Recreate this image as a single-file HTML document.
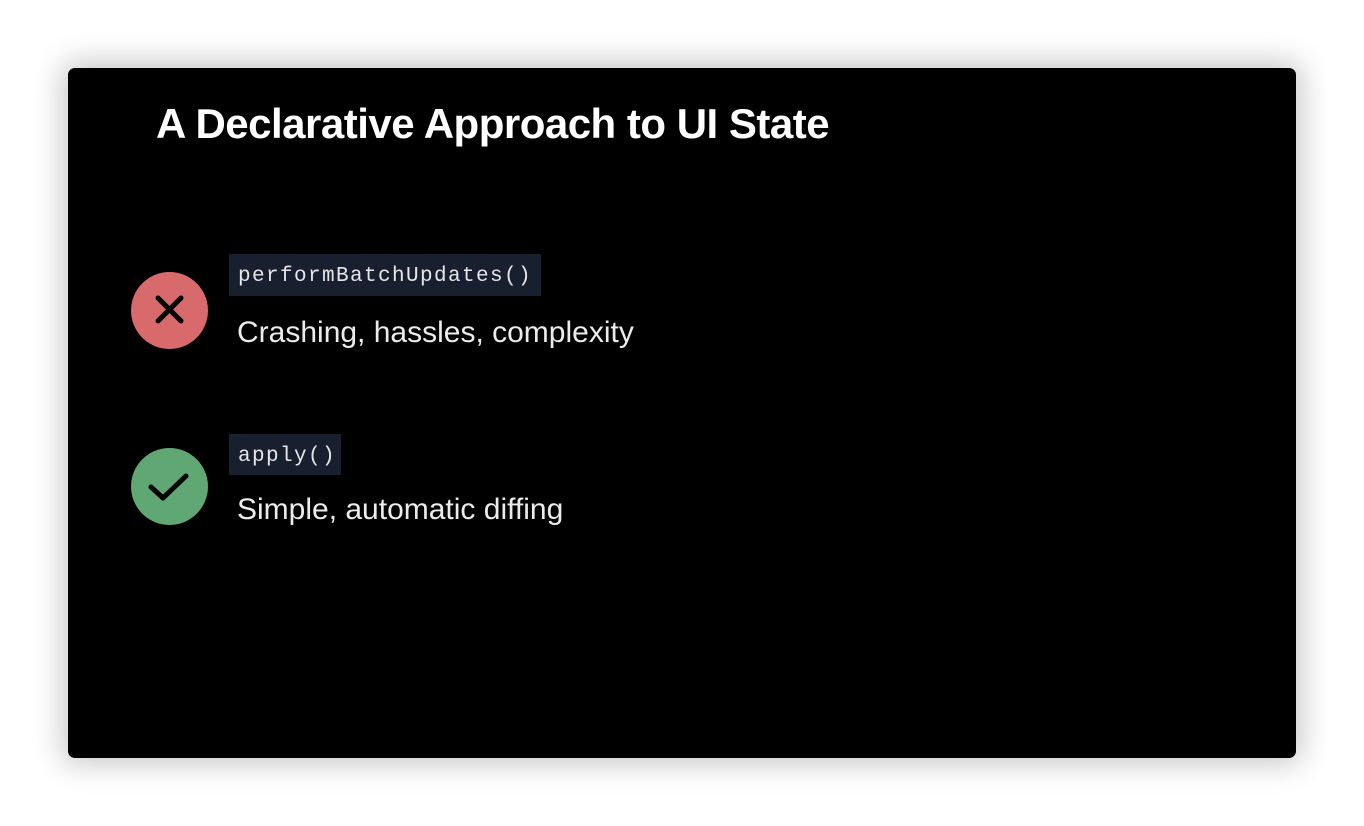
<!DOCTYPE html>
<html><head><style>
html,body{margin:0;padding:0;width:1364px;height:826px;background:#fff;overflow:hidden}
.slide{position:absolute;left:68px;top:68px;width:1228px;height:690px;background:#000;border-radius:7px;box-shadow:0 0 30px 6px rgba(0,0,0,0.22)}
.t{position:absolute;font-family:"Liberation Sans",sans-serif;color:#fff;white-space:nowrap;line-height:1}
.code{position:absolute;background:#182030;font-family:"Liberation Mono",monospace;color:#e6e6e6;font-size:21px;letter-spacing:1.4px;line-height:42px;padding-left:9px;padding-top:2px;box-sizing:border-box}
.c{position:absolute;width:77px;height:77px;border-radius:50%}
</style></head><body>
<div class="slide"></div>
<div class="t" style="left:156px;top:103px;font-size:42px;font-weight:bold;letter-spacing:-0.5px">A Declarative Approach to UI State</div>
<div class="c" style="left:131px;top:272px;background:#d96a6c"></div>
<svg style="position:absolute;left:131px;top:272px" width="77" height="77"><path d="M27 26 L50 49 M50 26 L27 49" stroke="#000" stroke-width="5" stroke-linecap="round"/></svg>
<div class="code" style="left:229px;top:254px;width:312px;height:42px">performBatchUpdates()</div>
<div class="t" style="left:237px;top:318px;font-size:30px;color:#ececec">Crashing, hassles, complexity</div>
<div class="c" style="left:131px;top:448px;background:#5fa873"></div>
<svg style="position:absolute;left:131px;top:448px" width="77" height="77"><path d="M20 39 L32 50 L55 28" fill="none" stroke="#000" stroke-width="5" stroke-linecap="round" stroke-linejoin="round"/></svg>
<div class="code" style="left:229px;top:434px;width:112px;height:41px">apply()</div>
<div class="t" style="left:237px;top:495px;font-size:30px;color:#ececec">Simple, automatic diffing</div>
</body></html>
